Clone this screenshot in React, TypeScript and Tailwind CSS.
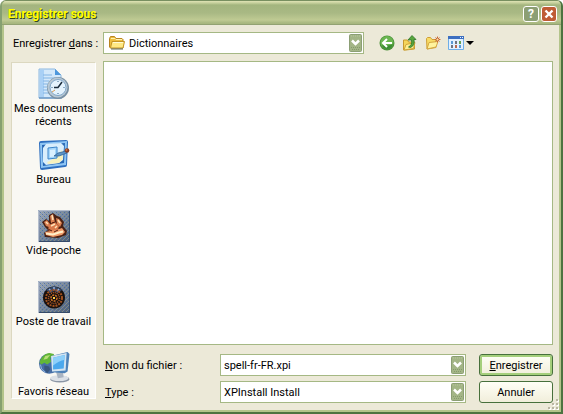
import { useState } from "react";
import type { ReactNode } from "react";

const RecentIcon = () => (
  <svg width="32" height="32" viewBox="0 0 32 32" aria-hidden="true">
    <path d="M1 1h16l6 6v23H1z" fill="#d3e8fa" stroke="#8db8e0" />
    <path d="M2 2h4v27H2z" fill="#a9d0f5" />
    <path d="M17 1v6h6z" fill="#4d97dc" />
    <path d="M5 7h9M5 10h12M5 13h6M5 16h5M5 19h4M5 22h4M5 25h6" stroke="#82b4e4" />
    <path d="M1 30h23" stroke="#4b7fb5" />
    <circle cx="20" cy="20" r="11" fill="#7890a4" />
    <circle cx="19.5" cy="19.5" r="10" fill="#b8c8d4" />
    <circle cx="20" cy="19.500" r="8" fill="#e4f3fd" stroke="#7fa6c8" />
    <path d="M20 13v1M20 25v1M13.500 19.500h1M25.500 19.500h1" stroke="#35658f" />
    <path d="M24 14l-4 5.500h-4" stroke="#1b2c3c" strokeWidth="1.500" fill="none" />
    <path d="M14 24l3-2" stroke="#d89a52" />
  </svg>
);

const DesktopIcon = () => (
  <svg width="32" height="32" viewBox="0 0 32 32" aria-hidden="true">
    <path d="M1 4q0-2 2-2l25-1q2 0 2 2l-1 23q0 2-2 2L4 31q-2 0-2-2z" fill="#2e6fbf" />
    <path d="M2 4l27-2-1 24-25 3z" fill="#8fc6f4" />
    <path d="M4 6l23-2-1 20-21 3z" fill="#2868b5" />
    <path d="M8 5l15-1 3 3-1 14-4 3-13 2-3-3V9z" fill="#d9eefc" />
    <path d="M9 23q7-2 15-12l1 9-4 4-11 1z" fill="#f7f1bd" />
    <path d="M10 9l9-1v11l-9 1z" fill="#a6d7fb" stroke="#3d86ca" />
    <path d="M12 11l5-.5v7l-5 .5z" fill="#d9f0ff" />
    <path d="M16 17l4-3 8-2 1 2-8 3z" fill="#5d93c5" stroke="#24598e" strokeWidth=".7" />
    <circle cx="29" cy="11.500" r="2.300" fill="#8a3a1c" />
    <circle cx="28.500" cy="11" r="1" fill="#d0703e" />
  </svg>
);

const PocketIcon = () => (
  <svg width="32" height="32" viewBox="0 0 32 32" aria-hidden="true">
    <defs>
      <pattern id="grain" width="4" height="4" patternUnits="userSpaceOnUse">
        <path d="M0 0h1v1H0zM2 2h1v1H2z" fill="#3f6796" />
        <path d="M2 0h1v1H2zM0 2h1v1H0z" fill="#8f9b84" />
        <path d="M1 1h1v1H1zM3 3h1v1H3z" fill="#7d8cae" />
      </pattern>
      <linearGradient id="slate" x2="1" y2="1">
        <stop offset="0" stopColor="#a2aec2" />
        <stop offset=".5" stopColor="#74859d" />
        <stop offset="1" stopColor="#4f5d70" />
      </linearGradient>
    </defs>
    <path d="M0 0h32v32H0z" fill="url(#slate)" />
    <path d="M0 0h32v32H0z" fill="url(#grain)" opacity=".7" />
    <path d="M.5 32V.5H32" stroke="#b4becd" fill="none" />
    <path d="M31.500 1v30.500H1" stroke="#354a68" fill="none" />
    {/* hands */}
    <path d="M4 12l4-3 3 2V5l4-2 4 3 3 1 4 5-1 4 4 5-1 4-8 3-13-1-1-4 4-3-3-3z" fill="#4a2114" />
    <path d="M6 12l3-2 3 4-1 3-3-1zM12 6l3-2 2 8-4 1zM18 8l3 1 3 4-2 4-3-3z" fill="#dc8051" />
    <path d="M11 15l6-3 4 4-1 4-6 2-4-2z" fill="#d9794a" />
    <path d="M8 12l2 2M14 5l1 5M13 16l4-2M20 10l2 3M17 18l2-2" stroke="#ffe0b5" strokeWidth="1.500" />
    <path d="M7 22l6-1 5-1 6-2 3 4-3 3-9 2-7-2z" fill="#ef9968" />
    <path d="M8 23.500l7 1 6-2 4-1" stroke="#fff0ca" strokeWidth="2" fill="none" />
    <path d="M10 19l4 2M16 22l4-2M14 13l3-1" stroke="#571e10" />
  </svg>
);

const ComputerIcon = () => (
  <svg width="32" height="32" viewBox="0 0 32 32" aria-hidden="true">
    <path d="M0 0h32v32H0z" fill="url(#slate)" />
    <path d="M0 0h32v32H0z" fill="url(#grain)" opacity=".7" />
    <path d="M.5 32V.5H32" stroke="#b4becd" fill="none" />
    <path d="M31.500 1v30.500H1" stroke="#354a68" fill="none" />
    <circle cx="16" cy="16.500" r="11" fill="#17110f" />
    <path d="M8 9q8-7 16 0l-4 3-4-2-4 2z" fill="#34496a" />
    <path d="M11 8l2 2M16 6v3M21 8l-2 2" stroke="#93afdc" strokeWidth="1.500" />
    <circle cx="16" cy="17" r="8" fill="none" stroke="#a0511f" strokeWidth="2" strokeDasharray="2 1" />
    <circle cx="16" cy="17" r="5.500" fill="none" stroke="#b65d27" strokeWidth="1.500" strokeDasharray="1 1" />
    <circle cx="16" cy="17" r="3" fill="none" stroke="#d27427" strokeWidth="1.500" strokeDasharray="2 1" />
    <path d="M15 16h2v2h-2z" fill="#ffd24c" />
  </svg>
);

const NetworkIcon = () => (
  <svg width="32" height="32" viewBox="0 0 32 32" aria-hidden="true">
    <circle cx="11" cy="12" r="10.500" fill="#466da5" />
    <path d="M2 8q3-6 9-7l5 1-1 3-3 1 1 4-4 3-3-2-3 2-2-2z" fill="#63b737" />
    <path d="M7 4l5-1-3 4-4 1z" fill="#b8df78" />
    <path d="M6 14l5 1 1 3-3 4-3-4z" fill="#38567e" />
    <path d="M2 13q0 5 5 8" stroke="#8fb4e0" fill="none" />
    <ellipse cx="22" cy="28" rx="10" ry="3.500" fill="#8b96a5" />
    <ellipse cx="21.500" cy="27" rx="9.500" ry="3" fill="#dbe0e6" />
    <path d="M18 20l7-1 1 7-6 1z" fill="#a9b4c2" />
    <path d="M13 4l17-4 2 2-2 18-3 2-13-1z" fill="#4e82b8" />
    <path d="M13 4l16-3-1 18-14 1z" fill="#d3e4f1" />
    <path d="M15 6l12-3-1 14-11 1z" fill="#4ba8ed" />
    <path d="M15 6l12-3v5q-6 1-12 6z" fill="#8ed0fa" />
  </svg>
);

const FolderIcon = () => (
  <svg width="16" height="16" viewBox="0 0 16 16" aria-hidden="true">
    <path d="M.5 3.500l1-2h4l1.500 2H13l1 1V13H1.500l-1-1z" fill="#eebd3e" stroke="#b98420" />
    <path d="M2 3.500h4l1 1h6" stroke="#fff3b0" fill="none" />
    <path d="M3 6.500h12.500L14 13H1.500z" fill="#ffe984" stroke="#c39427" />
    <path d="M4 7.500h10" stroke="#fffbd6" />
    <path d="M2 14h12" stroke="#5f6b5a" />
  </svg>
);

const BackIcon = () => (
  <svg width="16" height="16" viewBox="0 0 16 16" aria-hidden="true">
    <circle cx="8" cy="8" r="7.500" fill="#4a9139" />
    <circle cx="8" cy="7.500" r="6.500" fill="#6bb650" />
    <path d="M3 10q5 2 11-1-1 5-6 5-4 0-5-4z" fill="#3d8d33" />
    <path d="M8 4L4 8l4 4M4.500 8H13" stroke="#fff" strokeWidth="2" fill="none" />
  </svg>
);

const UpIcon = () => (
  <svg width="16" height="16" viewBox="0 0 16 16" aria-hidden="true">
    <path d="M1.500 5h4l1 2h6v7l-9 1h-2z" fill="#f6d65b" stroke="#c79a2e" />
    <path d="M4 9.500l9-2-1.500 6-9.500 1.500z" fill="#fff093" stroke="#cfa437" />
    <path d="M6.500 12q4-2 3-7H6l4-4.500 4 4h-2q1 6-3.500 8z" fill="#58a73d" stroke="#2f7428" strokeWidth=".8" />
  </svg>
);

const NewFolderIcon = () => (
  <svg width="16" height="16" viewBox="0 0 16 16" aria-hidden="true">
    <path d="M1.500 3.500l1-1h3l1.500 2h4v8l-9 1.500z" fill="#f8dc66" stroke="#cf9f35" />
    <path d="M4 7.500l9-1-2 5.500-9 2z" fill="#fff39d" stroke="#d4a741" />
    <path d="M12.500 1.500v6M9.500 4.500h6M10.500 2.500l4 4M14.500 2.500l-4 4" stroke="#d9743f" />
    <circle cx="12.500" cy="4.500" r="1.500" fill="#ffe0a0" stroke="#a8471f" strokeWidth=".7" />
  </svg>
);

const ViewIcon = () => (
  <svg width="26" height="16" viewBox="0 0 26 16" aria-hidden="true">
    <path d="M.5 1.500h15v13H.500z" fill="#e3f1ff" stroke="#6eaee8" />
    <path d="M0 1h16v3H0z" fill="#3d6fc0" />
    <path d="M12 2h1v1h-1zM14 2h1v1h-1z" fill="#e6f1ff" />
    <path d="M3 6h2v3H3zM11 10h2v3h-2z" fill="#5b9bd5" />
    <path d="M7 6h2v3H7zM3 10h2v3H3z" fill="#6d7480" />
    <path d="M11 6h2v3h-2z" fill="#67a350" />
    <path d="M7 10h2v3H7z" fill="#bb694c" />
    <path d="M18 6h8l-4 4z" fill="#000" />
  </svg>
);

const Arrow = () => (
  <svg width="13" height="18" viewBox="0 0 13 18" aria-hidden="true">
    <rect x=".5" y=".5" width="12" height="17" rx="1" fill="#a3b586" stroke="#8c9f75" />
    <path d="M2 2h9" stroke="#b8c69c" strokeDasharray="1 1" />
    <path d="M2 13.500h9M3 15.500h8" stroke="#869a6d" strokeDasharray="1 1" />
    <path d="M3 6.500l3.500 3.500 3.500-3.500" stroke="#fff" strokeWidth="2.500" fill="none" />
  </svg>
);

// Size grip in the bottom right corner
const Grip = () => (
  <svg width="11" height="11" viewBox="0 0 11 11" aria-hidden="true">
    <path d="M9 1h2v2H9zM5 5h2v2H5zM9 5h2v2H9zM1 9h2v2H1zM5 9h2v2H5zM9 9h2v2H9z" fill="#fff" />
    <path d="M8 0h2v2H8zM4 4h2v2H4zM8 4h2v2H8zM0 8h2v2H0zM4 8h2v2H4zM8 8h2v2H8z" fill="#b9b6a2" />
  </svg>
);

const places = [
  { label: "Mes documents récents", icon: RecentIcon },
  { label: "Bureau", icon: DesktopIcon },
  { label: "Vide-poche", icon: PocketIcon },
  { label: "Poste de travail", icon: ComputerIcon },
  { label: "Favoris réseau", icon: NetworkIcon },
];

const tools = [
  { label: "Précédent", icon: BackIcon },
  { label: "Dossier parent", icon: UpIcon },
  { label: "Nouveau dossier", icon: NewFolderIcon },
  { label: "Affichage", icon: ViewIcon },
];

const ComboBox = ({ children }: { children: ReactNode }) => (
  <div className="relative flex h-[22px] min-w-0 items-center border border-[#a5b884] bg-white">
    {children}
    <span className="pointer-events-none absolute right-px top-px">
      <Arrow />
    </span>
  </div>
);

const field = "h-full w-full min-w-0 appearance-none bg-transparent pr-4 outline-none";

const pushButton =
  "h-[22px] w-full rounded-[3px] border border-[#47703c] bg-gradient-to-b from-[#fffff6] to-[#f1eedb]";

const App = () => {
  const [fileName, setFileName] = useState("spell-fr-FR.xpi");

  return (
    <div className="relative flex min-h-screen flex-col overflow-hidden rounded-t-md border-2 border-t border-[#4d7340] border-l-[#86a070] border-t-[#788f60] bg-[#b3c48b] font-[Roboto,'Liberation_Sans',sans-serif] text-[11px] leading-[13px] text-black">
      {/* Title bar */}
      <header className="flex h-6 items-center justify-between border-b border-[#92a272] bg-[linear-gradient(#e0e3b5_0,#c5cf9b_2px,#a3b57e_4px,#a9b984_12px,#bfca93_19px,#a8b77f_22px)] pl-1.5 pr-1">
        <h1 className="pt-0.5 text-xs font-bold text-[#ffff00] [text-shadow:1px_1px_0_#2f4718]">
          Enregistrer sous
        </h1>
        <div className="flex gap-0.5 pt-0.5">
          <button
            type="button"
            aria-label="Aide"
            className="flex size-4 items-center justify-center rounded-[3px] border border-white bg-[#8c9f74] text-xs font-bold text-white"
          >
            ?
          </button>
          <button
            type="button"
            aria-label="Fermer"
            className="flex size-4 items-center justify-center rounded-[3px] border border-white bg-[#bf5c35]"
          >
            <svg width="10" height="10" viewBox="0 0 10 10" aria-hidden="true">
              <path d="M1.500 1.500l7 7M8.500 1.500l-7 7" stroke="#fff" strokeWidth="2.400" />
            </svg>
          </button>
        </div>
      </header>

      <form
        className="mx-0.5 mb-0.5 flex flex-1 flex-col bg-[#ece9d8] pb-[7px] pl-[7px] pr-1.5 pt-[7px]"
        onSubmit={(e) => e.preventDefault()}
      >
        {/* Location */}
        <div className="flex items-center">
          <label htmlFor="location" className="w-[92px] shrink-0 whitespace-nowrap pl-0.5">
            Enregistrer <u>d</u>ans :
          </label>
          <div className="min-w-0 flex-1">
            <ComboBox>
              <span className="pointer-events-none absolute left-[5px]">
                <FolderIcon />
              </span>
              <select id="location" className={`${field} pl-[25px]`}>
                <option>Dictionnaires</option>
              </select>
            </ComboBox>
          </div>
          <div className="flex w-[189px] shrink-0 gap-[7px] pl-[15px]">
            {tools.map((tool) => (
              <button key={tool.label} type="button" aria-label={tool.label}>
                <tool.icon />
              </button>
            ))}
          </div>
        </div>

        <div className="mt-[7px] flex flex-1 gap-[7px]">
          {/* Places bar */}
          <nav className="mb-1 mt-px w-[85px] shrink-0 border border-[#dcd8c0] border-b-white border-r-white bg-[#f9f8f3] pt-[5px]">
            {places.map((place) => (
              <button
                key={place.label}
                type="button"
                className="flex h-[71px] w-full flex-col items-center gap-0.5 last:h-[46px]"
              >
                <place.icon />
                <span>{place.label}</span>
              </button>
            ))}
          </nav>

          <div className="flex min-w-0 flex-1 flex-col gap-[9px]">
            <div role="listbox" aria-label="Fichiers" className="flex-1 border border-[#a5b884] bg-white" />

            <div className="grid grid-cols-[117px_1fr_87px] items-center gap-y-[5px]">
              <label htmlFor="filename" className="pl-0.5">
                <u>N</u>om du fichier :
              </label>
              <ComboBox>
                <input
                  id="filename"
                  value={fileName}
                  onChange={(e) => setFileName(e.target.value)}
                  className={`${field} pl-[3px]`}
                />
              </ComboBox>
              <div className="pl-[13px]">
                <button type="submit" className={`${pushButton} shadow-[inset_0_0_0_2px_#a5cf7c]`}>
                  <u>E</u>nregistrer
                </button>
              </div>

              <label htmlFor="type" className="pl-0.5">
                <u>T</u>ype :
              </label>
              <ComboBox>
                <select id="type" className={`${field} pl-[3px]`}>
                  <option>XPInstall Install</option>
                </select>
              </ComboBox>
              <div className="pl-[13px]">
                <button type="button" className={pushButton}>
                  Annuler
                </button>
              </div>
            </div>
          </div>
        </div>
      </form>
      <span className="pointer-events-none absolute bottom-0.5 right-0.5">
        <Grip />
      </span>
    </div>
  );
};

export default App;
